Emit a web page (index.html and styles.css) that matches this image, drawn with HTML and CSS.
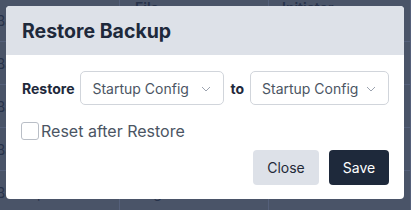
FILE: index.html
```html
<!DOCTYPE html>
<html lang="en">
<head>
    <meta charset="UTF-8">
    <meta name="viewport" content="width=device-width, initial-scale=1.0">
    <title>Restore Backup</title>
    <link rel="stylesheet" href="styles.css">
</head>
<body>
 <div class="page">
    <div class="table">
        <div class="table-row table-row--head">
            <span class="table-cell"></span>
            <span class="table-cell">File</span>
            <span class="table-cell">Initiator</span>
        </div>
        <div class="table-row">
            <span class="table-cell">Backup 1</span>
            <span class="table-cell">config</span>
            <span class="table-cell">admin</span>
        </div>
        <div class="table-row">
            <span class="table-cell">Backup 2</span>
            <span class="table-cell">config</span>
            <span class="table-cell">admin</span>
        </div>
        <div class="table-row">
            <span class="table-cell">Backup 3</span>
            <span class="table-cell">config</span>
            <span class="table-cell">admin</span>
        </div>
        <div class="table-row">
            <span class="table-cell">Backup 4</span>
            <span class="table-cell">config</span>
            <span class="table-cell">admin</span>
        </div>
        <div class="table-row">
            <span class="table-cell">Backup 5</span>
            <span class="table-cell">config</span>
            <span class="table-cell">admin</span>
        </div>
    </div>

    <div class="modal">
        <div class="modal__header">Restore Backup</div>
        <div class="modal__body">
            <div class="restore-row">
                <span class="restore-row__label">Restore</span>
                <div class="select">
                    <span>Startup Config</span>
                    <svg class="select__icon" viewBox="0 0 10 6" width="10" height="6"><path d="M1 1l4 4 4-4" fill="none" stroke="#9ca3af" stroke-width="1"/></svg>
                </div>
                <span class="restore-row__label">to</span>
                <div class="select">
                    <span>Startup Config</span>
                    <svg class="select__icon" viewBox="0 0 10 6" width="10" height="6"><path d="M1 1l4 4 4-4" fill="none" stroke="#9ca3af" stroke-width="1"/></svg>
                </div>
            </div>
            <label class="check">
                <span class="check__box"></span>
                <span>Reset after Restore</span>
            </label>
            <div class="modal__actions">
                <button class="btn btn--light">Close</button>
                <button class="btn btn--dark">Save</button>
            </div>
        </div>
    </div>
 </div>
</body>
</html>
```

FILE: styles.css
```css
html,
body {
    margin: 0;
    width: 100%;
    height: 100%;
}

body {
    font-family: "Inter", "Noto Sans", sans-serif;
    background: #4a5468;
    overflow: hidden;
    -webkit-font-smoothing: antialiased;
}

.page {
    position: relative;
    display: flow-root;
    width: 411px;
    height: 210px;
    overflow: hidden;
}

.table {
    display: flex;
    flex-direction: column;
    margin-left: -4px;
    margin-top: -1px;
    color: #27324a;
    font-size: 14px;
}

.table-row {
    display: grid;
    grid-template-columns: 124px 149px 1fr;
    height: 43px;
    box-sizing: border-box;
    align-items: center;
    border-bottom: 1px solid #55607a;
}

.table-row--head {
    height: 0;
    border-bottom: 0;
    font-weight: 600;
}

.table-cell {
    height: 100%;
    display: flex;
    align-items: center;
    border-right: 1px solid #55607a;
}

.table-row--head .table-cell {
    border-right: 0;
}

.table-row--head .table-cell:nth-child(2) {
    padding-left: 15px;
}

.table-row--head .table-cell:nth-child(3) {
    padding-left: 13px;
}

.modal {
    position: absolute;
    top: 6px;
    left: 6px;
    width: 398px;
    height: 193px;
    display: flex;
    flex-direction: column;
    background: #fff;
    border-radius: 4px;
    overflow: hidden;
}

.modal__header {
    height: 49px;
    flex-shrink: 0;
    box-sizing: border-box;
    padding: 0 16px;
    display: flex;
    align-items: center;
    background: #dde1e8;
    color: #1e293b;
    font-size: 19.5px;
    font-weight: 700;
}

.modal__body {
    display: flex;
    flex-direction: column;
    padding: 16px 15px 14px 16px;
    flex: 1;
}

.restore-row {
    display: flex;
    align-items: center;
    gap: 6px;
}

.restore-row__label {
    color: #1e293b;
    font-size: 14px;
    font-weight: 700;
}

.select {
    width: 145px;
    height: 34px;
    box-sizing: border-box;
    display: flex;
    align-items: center;
    justify-content: space-between;
    padding: 0 12px 0 11px;
    border: 1px solid #d1d5db;
    border-radius: 5px;
    color: #4b5563;
    font-size: 14px;
}

.restore-row .select:last-child {
    width: 140px;
}

.select__icon {
    margin-top: 1px;
}

.check {
    display: flex;
    align-items: center;
    margin-top: 16px;
    margin-left: -1px;
    color: #4b5563;
    font-size: 16px;
}

.check__box {
    width: 16px;
    height: 16px;
    border: 1px solid #b9bec6;
    border-radius: 3px;
    margin-right: 2px;
}

.modal__actions {
    display: flex;
    justify-content: flex-end;
    gap: 10px;
    margin-top: auto;
}

.btn {
    height: 35px;
    border: 0;
    border-radius: 4px;
    font-family: inherit;
    font-size: 14px;
    padding: 0 13px;
}

.btn--light {
    width: 66px;
    background: #dde1e8;
    color: #1f2937;
}

.btn--dark {
    width: 60px;
    background: #1e293b;
    color: #fff;
}
```
